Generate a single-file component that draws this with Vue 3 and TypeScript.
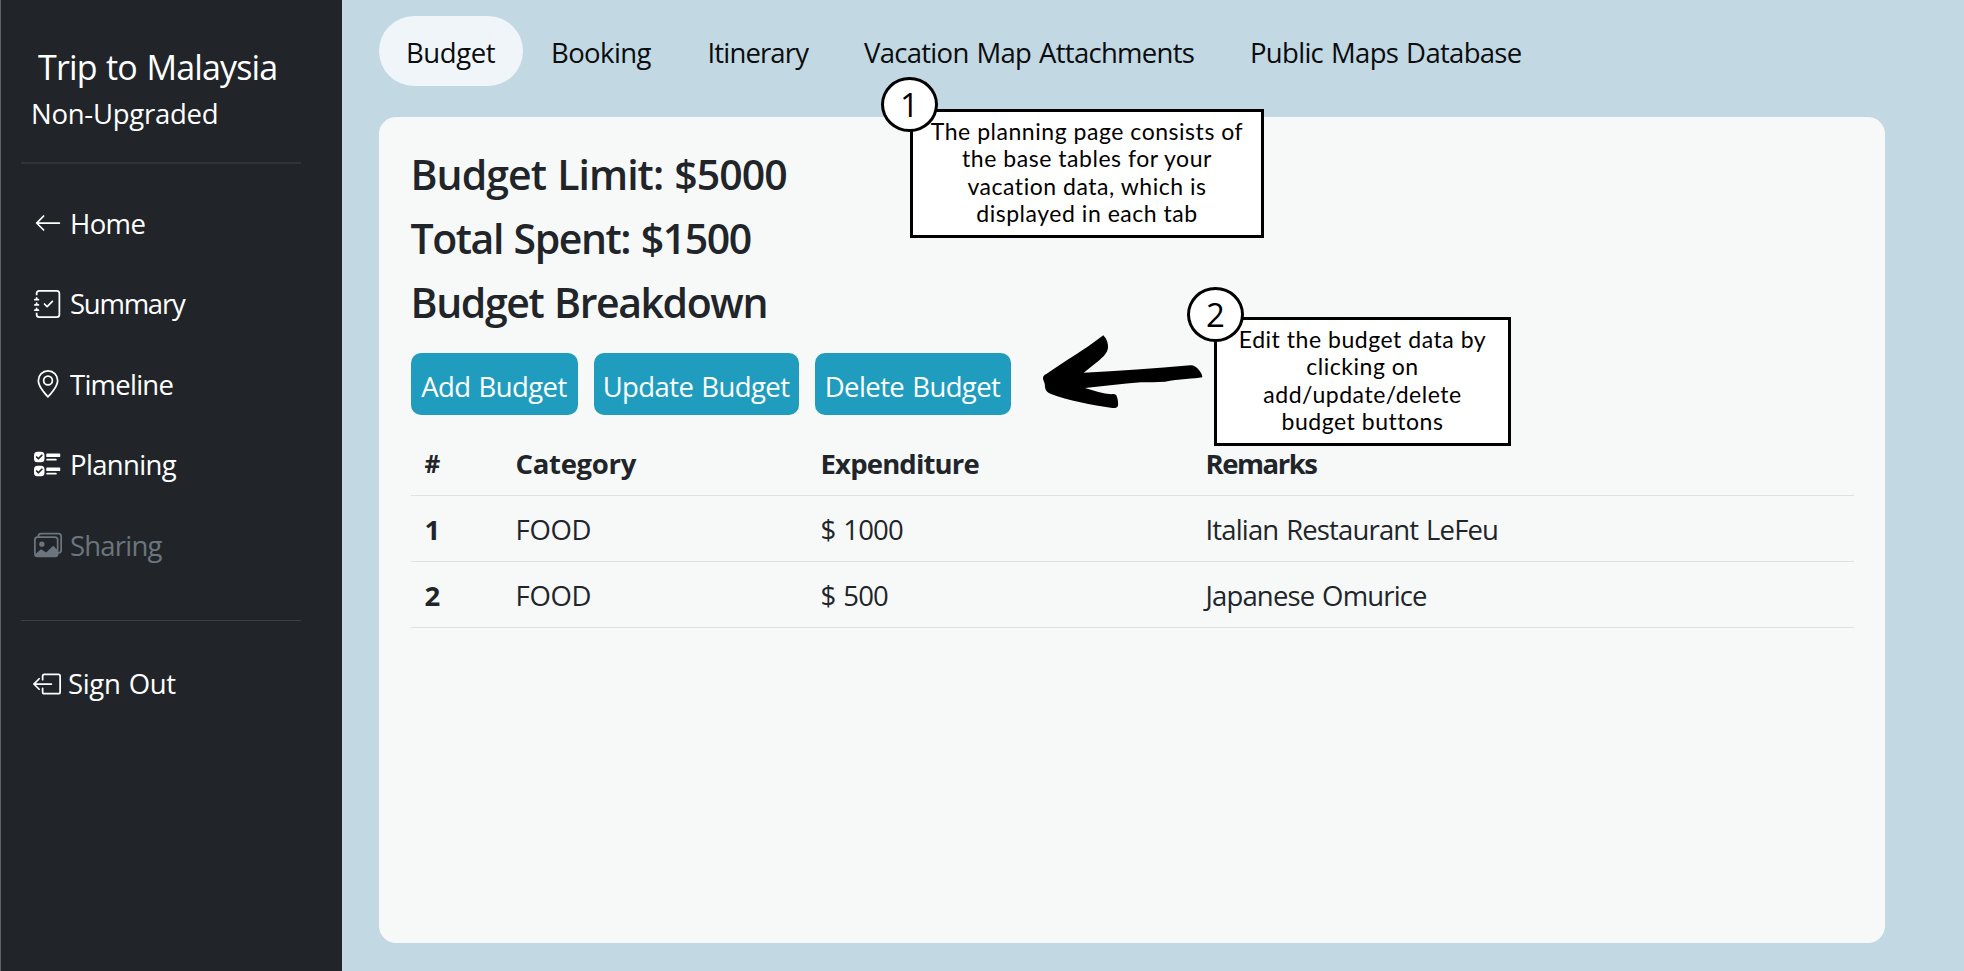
<script setup lang="ts">
interface NavItem {
  label: string
  key: string
  paths: string[]
  muted?: boolean
}

interface BudgetRow {
  id: number
  category: string
  amount: number
  remarks: string
}

const navItems: NavItem[] = [
  {
    label: 'Home',
    key: 'home',
    paths: [
      'M15 8a.5.5 0 0 0-.5-.5H2.707l3.147-3.146a.5.5 0 1 0-.708-.708l-4 4a.5.5 0 0 0 0 .708l4 4a.5.5 0 0 0 .708-.708L2.707 8.5H14.5A.5.5 0 0 0 15 8z',
    ],
  },
  {
    label: 'Summary',
    key: 'summary',
    paths: [
      'M10.854 6.146a.5.5 0 0 1 0 .708l-3 3a.5.5 0 0 1-.708 0l-1.5-1.5a.5.5 0 1 1 .708-.708L7.5 8.793l2.646-2.647a.5.5 0 0 1 .708 0z',
      'M3 0h10a2 2 0 0 1 2 2v12a2 2 0 0 1-2 2H3a2 2 0 0 1-2-2v-1h1v1a1 1 0 0 0 1 1h10a1 1 0 0 0 1-1V2a1 1 0 0 0-1-1H3a1 1 0 0 0-1 1v1H1V2a2 2 0 0 1 2-2z',
      'M1 5v-.5a.5.5 0 0 1 1 0V5h.5a.5.5 0 0 1 0 1h-2a.5.5 0 0 1 0-1H1zm0 3v-.5a.5.5 0 0 1 1 0V8h.5a.5.5 0 0 1 0 1h-2a.5.5 0 0 1 0-1H1zm0 3v-.5a.5.5 0 0 1 1 0v.5h.5a.5.5 0 0 1 0 1h-2a.5.5 0 0 1 0-1H1z',
    ],
  },
  {
    label: 'Timeline',
    key: 'timeline',
    paths: [
      'M12.166 8.94c-.524 1.062-1.234 2.12-1.96 3.07A31.493 31.493 0 0 1 8 14.58a31.481 31.481 0 0 1-2.206-2.57c-.726-.95-1.436-2.008-1.96-3.07C3.304 7.867 3 6.862 3 6a5 5 0 0 1 10 0c0 .862-.305 1.867-.834 2.94zM8 16s6-5.686 6-10A6 6 0 0 0 2 6c0 4.314 6 10 6 10z',
      'M8 8a2 2 0 1 1 0-4 2 2 0 0 1 0 4zm0 1a3 3 0 1 0 0-6 3 3 0 0 0 0 6z',
    ],
  },
  {
    label: 'Planning',
    key: 'planning',
    paths: [
      'M7 2.5a.5.5 0 0 1 .5-.5h7a.5.5 0 0 1 .5.5v1a.5.5 0 0 1-.5.5h-7a.5.5 0 0 1-.5-.5v-1zM2 1a2 2 0 0 0-2 2v2a2 2 0 0 0 2 2h2a2 2 0 0 0 2-2V3a2 2 0 0 0-2-2H2zm0 8a2 2 0 0 0-2 2v2a2 2 0 0 0 2 2h2a2 2 0 0 0 2-2v-2a2 2 0 0 0-2-2H2zm.854-3.646a.5.5 0 0 1-.708 0l-1-1a.5.5 0 1 1 .708-.708l.646.647 1.646-1.647a.5.5 0 1 1 .708.708l-2 2zm0 8a.5.5 0 0 1-.708 0l-1-1a.5.5 0 0 1 .708-.708l.646.647 1.646-1.647a.5.5 0 0 1 .708.708l-2 2zM7 10.5a.5.5 0 0 1 .5-.5h7a.5.5 0 0 1 .5.5v1a.5.5 0 0 1-.5.5h-7a.5.5 0 0 1-.5-.5v-1zm0-5a.5.5 0 0 1 .5-.5h5a.5.5 0 0 1 0 1h-5a.5.5 0 0 1-.5-.5zm0 8a.5.5 0 0 1 .5-.5h5a.5.5 0 0 1 0 1h-5a.5.5 0 0 1-.5-.5z',
    ],
  },
  {
    label: 'Sharing',
    key: 'sharing',
    muted: true,
    paths: [
      'M4.502 9a1.5 1.5 0 1 0 0-3 1.5 1.5 0 0 0 0 3z',
      'M14.002 13a2 2 0 0 1-2 2h-10a2 2 0 0 1-2-2V5A2 2 0 0 1 2 3a2 2 0 0 1 2-2h10a2 2 0 0 1 2 2v8a2 2 0 0 1-1.998 2zM14 2H4a1 1 0 0 0-1 1h9.002a2 2 0 0 1 2 2v7A1 1 0 0 0 15 11V3a1 1 0 0 0-1-1zM2.002 4a1 1 0 0 0-1 1v8l2.646-2.354a.5.5 0 0 1 .63-.062l2.66 1.773 3.71-3.71a.5.5 0 0 1 .577-.094l1.777 1.947V5a1 1 0 0 0-1-1h-10z',
    ],
  },
]

const signOutPaths: string[] = [
  'M6 12.5a.5.5 0 0 0 .5.5h8a.5.5 0 0 0 .5-.5v-9a.5.5 0 0 0-.5-.5h-8a.5.5 0 0 0-.5.5v2a.5.5 0 0 1-1 0v-2A1.5 1.5 0 0 1 6.5 2h8A1.5 1.5 0 0 1 16 3.5v9a1.5 1.5 0 0 1-1.5 1.5h-8A1.5 1.5 0 0 1 5 12.5v-2a.5.5 0 0 1 1 0v2z',
  'M.146 8.354a.5.5 0 0 1 0-.708l3-3a.5.5 0 1 1 .708.708L1.707 7.5H10.5a.5.5 0 0 1 0 1H1.707l2.147 2.146a.5.5 0 0 1-.708.708l-3-3z',
]

const tabs: string[] = ['Budget', 'Booking', 'Itinerary', 'Vacation Map Attachments', 'Public Maps Database']
const activeTab = 'Budget'

const budgetLimit = 5000
const rows: BudgetRow[] = [
  { id: 1, category: 'FOOD', amount: 1000, remarks: 'Italian Restaurant LeFeu' },
  { id: 2, category: 'FOOD', amount: 500, remarks: 'Japanese Omurice' },
]
const totalSpent = rows.reduce((sum, row) => sum + row.amount, 0)

const actions: string[] = ['Add Budget', 'Update Budget', 'Delete Budget']

const callouts: { step: number; lines: string[] }[] = [
  {
    step: 1,
    lines: ['The planning page consists of', 'the base tables for your', 'vacation data, which is', 'displayed in each tab'],
  },
  {
    step: 2,
    lines: ['Edit the budget data by', 'clicking on', 'add/update/delete', 'budget buttons'],
  },
]
</script>

<template>
  <div class="app">
    <aside class="sidebar">
      <header class="brand">
        <h1 class="trip">Trip to Malaysia</h1>
        <p class="plan">Non-Upgraded</p>
      </header>
      <hr class="rule first" />
      <nav class="menu">
        <a v-for="item in navItems" :key="item.key" class="item" :class="[item.key, { muted: item.muted }]">
          <svg class="icon" viewBox="0 0 16 16" fill="currentColor" fill-rule="evenodd">
            <path v-for="d in item.paths" :key="d" :d="d" />
          </svg>
          <span class="label">{{ item.label }}</span>
        </a>
      </nav>
      <hr class="rule" />
      <a class="item signout">
        <svg class="icon" viewBox="0 0 16 16" fill="currentColor" fill-rule="evenodd">
          <path v-for="d in signOutPaths" :key="d" :d="d" />
        </svg>
        <span>Sign Out</span>
      </a>
    </aside>

    <main class="main">
      <nav class="tabs">
        <a v-for="tab in tabs" :key="tab" class="tab" :class="{ active: tab === activeTab }">{{ tab }}</a>
      </nav>

      <section class="panel">
        <h2 class="limit">Budget Limit: ${{ budgetLimit }}</h2>
        <h2 class="spent">Total Spent: ${{ totalSpent }}</h2>
        <h2 class="breakdown">Budget Breakdown</h2>

        <div class="actions">
          <button v-for="action in actions" :key="action" class="btn" type="button">{{ action }}</button>
        </div>

        <div class="table">
          <div class="row head">
            <span class="num">#</span>
            <span>Category</span>
            <span>Expenditure</span>
            <span>Remarks</span>
          </div>
          <div v-for="row in rows" :key="row.id" class="row">
            <span class="num">{{ row.id }}</span>
            <span>{{ row.category }}</span>
            <span>$ {{ row.amount }}</span>
            <span>{{ row.remarks }}</span>
          </div>
        </div>
      </section>
    </main>

    <!-- Tutorial annotations laid over the page -->
    <div v-for="note in callouts" :key="note.step" class="callout" :class="'step-' + note.step">
      <p v-for="line in note.lines" :key="line" class="line">{{ line }}</p>
      <span class="badge">{{ note.step }}</span>
    </div>
    <svg class="arrow" viewBox="0 0 540 285">
      <path
        d="M205 31C215 41 220 54 219 69C216 86 203 97 191 107L146 143C250 138 360 130 466 121C475 120 484 126 490 133C497 141 502 149 502 157C480 161 430 163 390 170C365 172 340 171 318 172C260 177 205 183 150 189C176 197 205 206 229 208C239 206 244 208 246 216C249 225 250 234 249 242C247 248 241 250 232 249C170 239 100 227 46 206C36 202 31 196 30 186C30 176 27 170 24 163C23 154 27 150 34 147C90 108 148 75 205 31Z"
      />
    </svg>
  </div>
</template>

<style>
body {
  margin: 0;
  overflow: hidden;
}
</style>

<style scoped>
.app {
  position: relative;
  display: flex;
  width: 1964px;
  height: 971px;
  background: #c2d8e3;
  color: #212529;
  font-family: 'Open Sans', 'Noto Sans', sans-serif;
  font-size: 27.5px;
  letter-spacing: -0.7px;
  word-spacing: 1.5px;
  white-space: nowrap;
}

h1,
h2,
p {
  margin: 0;
}

.sidebar {
  box-sizing: border-box;
  width: 342px;
  height: 971px;
  padding: 46px 41px 0 20px;
  border-left: 1px solid #606468;
  background: #212529;
  color: #fff;
}

.brand {
  height: 116px;
}

.trip {
  padding-left: 17px;
  font-size: 34px;
  font-weight: 400;
  line-height: 42px;
  letter-spacing: -0.85px;
}

.plan {
  padding-left: 10px;
  margin-top: 5px;
  line-height: 42px;
  letter-spacing: -0.25px;
}

.rule {
  height: 1px;
  margin: 0;
  border: 0;
  background: #3c4043;
}

.rule.first {
  height: 2px;
  background: #303437;
}

.menu {
  padding: 19px 0 35px;
}

.item {
  display: flex;
  align-items: center;
  height: 80.4px;
  padding-left: 13px;
  line-height: 40px;
}

.icon {
  flex: none;
  width: 28px;
  height: 28px;
  margin-right: 8px;
}

.label {
  padding-top: 2px;
}

.muted {
  color: #6c757d;
}

.home {
  letter-spacing: -0.6px;
}

.summary {
  letter-spacing: -1.25px;
}

.summary .label {
  padding-top: 0;
}

.timeline {
  letter-spacing: -0.75px;
}

.planning {
  letter-spacing: -0.65px;
}

.sharing {
  letter-spacing: -0.8px;
}

.signout {
  height: 80px;
  padding: 23px 0 0 12px;
  letter-spacing: -0.35px;
}

.signout .icon {
  margin-right: 7px;
}

.main {
  flex: 1;
  padding: 16px 79px 0 37px;
}

.tabs {
  display: grid;
  grid-template-columns: 144px 157px 157px 386px 320px;
  height: 70px;
}

.tab {
  box-sizing: border-box;
  height: 70px;
  padding-left: 27px;
  border-radius: 35px;
  color: #0a0c0e;
  line-height: 74px;
}

.tab:nth-child(1) {
  letter-spacing: -0.4px;
}

.tab:nth-child(2) {
  padding-left: 28px;
  letter-spacing: -0.6px;
}

.tab:nth-child(3) {
  padding-left: 27.5px;
  letter-spacing: -0.85px;
}

.tab:nth-child(4) {
  letter-spacing: -0.72px;
}

.tab.active {
  background: #eff5f9;
}

.panel {
  box-sizing: border-box;
  height: 826px;
  margin-top: 31px;
  padding: 25px 31px 0 31.5px;
  border-radius: 17px;
  background: #f7f9f9;
}

.panel h2 {
  font-size: 41px;
  font-weight: 550;
  line-height: 64px;
}

.limit {
  letter-spacing: -0.95px;
}

.spent {
  letter-spacing: -1.45px;
}

.breakdown {
  letter-spacing: -1.4px;
}

.actions {
  display: grid;
  grid-template-columns: 167px 205px 196px;
  gap: 16px;
  margin-top: 19px;
}

.btn {
  height: 62px;
  padding: 4px 0 0;
  border: 0;
  border-radius: 10px;
  background: #209dbe;
  color: #fff;
  font: inherit;
  letter-spacing: -0.6px;
  word-spacing: 1.5px;
}

.table {
  margin-top: 15px;
}

.row {
  display: grid;
  grid-template-columns: 90px 305px 385px 1fr;
  height: 65px;
  border-bottom: 1px solid #dee2e6;
  line-height: 67px;
}

.row > span {
  padding-left: 15px;
  letter-spacing: -0.8px;
}

.row > span:nth-child(2) {
  letter-spacing: -0.3px;
}

.row > span:nth-child(4) {
  letter-spacing: -0.85px;
}

.head > span,
.row > .num {
  font-weight: 700;
}

.row > .num {
  padding-left: 14px;
}

.head > span:nth-child(3) {
  letter-spacing: -0.83px;
}

.head > span:nth-child(4) {
  letter-spacing: -1.45px;
}

.head > .num {
  font-size: 24.5px;
}

.callout {
  position: absolute;
  box-sizing: border-box;
  height: 129px;
  padding-top: 6px;
  border: 3px solid #000;
  background: #fff;
  color: #000;
  font-family: Lato, sans-serif;
  font-size: 23px;
  letter-spacing: 0.53px;
  word-spacing: 0;
  text-align: center;
}

.line {
  line-height: 27.4px;
}

.step-1 {
  left: 910px;
  top: 109px;
  width: 354px;
}

.step-2 {
  left: 1214px;
  top: 317px;
  width: 297px;
}

.badge {
  position: absolute;
  top: -35px;
  left: -32px;
  box-sizing: border-box;
  width: 57px;
  height: 55px;
  border: 3px solid #000;
  border-radius: 50%;
  background: #fff;
  font-family: 'Open Sans', sans-serif;
  font-size: 33px;
  line-height: 50px;
  letter-spacing: 0;
}

.step-2 .badge {
  top: -33px;
  left: -30px;
}

.arrow {
  position: absolute;
  left: 1035px;
  top: 325px;
  width: 180px;
  height: 95px;
}
</style>
